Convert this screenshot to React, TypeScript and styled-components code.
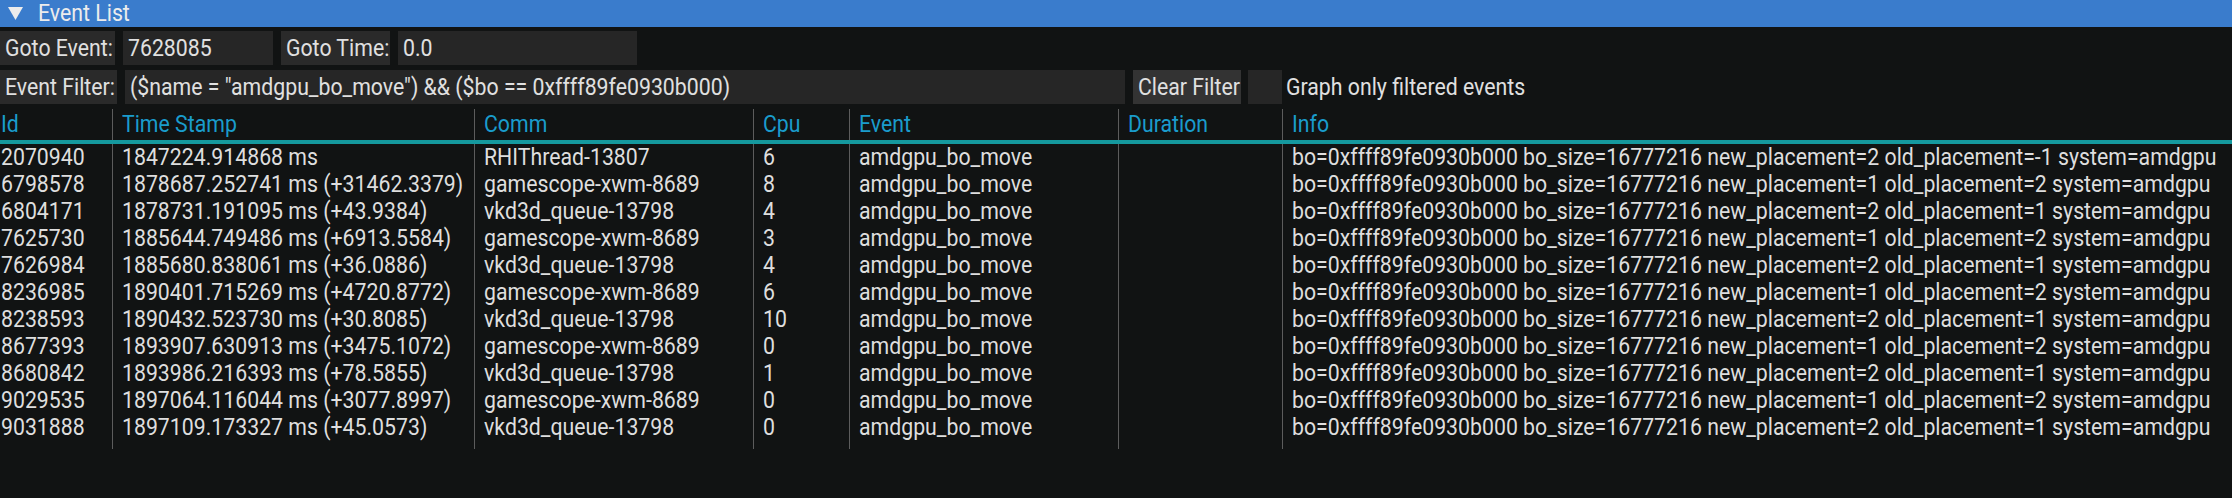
import styled, { createGlobalStyle } from "styled-components";

const GlobalStyle = createGlobalStyle`
    html, body {
        margin:0;
        padding:0;
        background:#111313;
    }
    body {
        font-family:Roboto, "Liberation Sans", sans-serif;
        font-size:23px;
        color:#dedede;
    }
`

const Window = styled.div`
    width:2232px;
    height:498px;
    background:#111313;
    overflow:hidden;
    display:flex;
    flex-direction:column;
`

// the app font is narrower than Roboto, so squeeze the glyphs a bit
const Txt = styled.span`
    display:inline-block;
    white-space:pre;
    transform:scaleX(0.925);
    transform-origin:left center;
`

const TitleBar = styled.div`
    height:27px;
    background:#3a7ccc;
    display:flex;
    align-items:center;
    gap:15px;
    padding-left:8px;
    color:#ececec;
    flex-shrink:0;
`

const Toolbar = styled.div`
    display:flex;
    flex-direction:column;
    gap:5px;
    padding-top:4px;
`

const ToolRow = styled.div`
    display:flex;
    align-items:center;
    height:34px;
    gap:8px;
`

const Button = styled.div<{ $w: number; $light?: boolean }>`
    height:100%;
    width:${({ $w }) => $w}px;
    box-sizing:border-box;
    display:flex;
    align-items:center;
    padding:0 5px;
    background:${({ $light }) => ($light ? "#333333" : "#2a2a2a")};
    color:#e0e0e0;
    overflow:hidden;
`

const Input = styled.div<{ $w: number }>`
    height:100%;
    width:${({ $w }) => $w}px;
    display:flex;
    align-items:center;
    padding:0 5px;
    box-sizing:border-box;
    background:#262626;
    color:#e0e0e0;
    overflow:hidden;
`

const CheckBox = styled.div`
    width:34px;
    height:100%;
    background:#262626;
    margin-left:-1px;
`

const CheckLabel = styled.span`
    margin-left:-4px;
    color:#e0e0e0;
`

const Table = styled.div`
    margin-top:5px;
    display:flex;
    flex-direction:column;
`

const cols = "112px 362px 279px 96px 269px 164px 1fr";

const HeaderRow = styled.div`
    display:grid;
    grid-template-columns:${cols};
    height:31px;
    border-bottom:4px solid #15999e;
`

const Row = styled.div<{ $h?: number }>`
    display:grid;
    grid-template-columns:${cols};
    height:${({ $h }) => $h ?? 27}px;
`

const Cell = styled.div<{ $head?: boolean }>`
    display:flex;
    align-items:center;
    overflow:hidden;
    padding-left:9px;
    border-left:1px solid #5c5c5c;
    color:${({ $head }) => ($head ? "#1a9ccc" : "#dedede")};

    &:first-child {
        border-left:none;
        padding-left:1px;
    }
`

const headers = ["Id", "Time Stamp", "Comm", "Cpu", "Event", "Duration", "Info"];

const info = (n: number, o: number) =>
    `bo=0xffff89fe0930b000 bo_size=16777216 new_placement=${n} old_placement=${o} system=amdgpu`;

const rows: string[][] = [
    ["2070940", "1847224.914868 ms", "RHIThread-13807", "6", info(2, -1)],
    ["6798578", "1878687.252741 ms (+31462.3379)", "gamescope-xwm-8689", "8", info(1, 2)],
    ["6804171", "1878731.191095 ms (+43.9384)", "vkd3d_queue-13798", "4", info(2, 1)],
    ["7625730", "1885644.749486 ms (+6913.5584)", "gamescope-xwm-8689", "3", info(1, 2)],
    ["7626984", "1885680.838061 ms (+36.0886)", "vkd3d_queue-13798", "4", info(2, 1)],
    ["8236985", "1890401.715269 ms (+4720.8772)", "gamescope-xwm-8689", "6", info(1, 2)],
    ["8238593", "1890432.523730 ms (+30.8085)", "vkd3d_queue-13798", "10", info(2, 1)],
    ["8677393", "1893907.630913 ms (+3475.1072)", "gamescope-xwm-8689", "0", info(1, 2)],
    ["8680842", "1893986.216393 ms (+78.5855)", "vkd3d_queue-13798", "1", info(2, 1)],
    ["9029535", "1897064.116044 ms (+3077.8997)", "gamescope-xwm-8689", "0", info(1, 2)],
    ["9031888", "1897109.173327 ms (+45.0573)", "vkd3d_queue-13798", "0", info(2, 1)],
];

export default function App() {
    return (
        <>
            <GlobalStyle />
            <Window>
                <TitleBar>
                    <svg width="15" height="13" viewBox="0 0 15 13">
                        <polygon points="0,0 15,0 7.5,13" fill="#ececec" />
                    </svg>
                    <Txt>Event List</Txt>
                </TitleBar>
                <Toolbar>
                    <ToolRow>
                        <Button $w={115}><Txt>Goto Event:</Txt></Button>
                        <Input $w={150}><Txt>7628085</Txt></Input>
                        <Button $w={109}><Txt>Goto Time:</Txt></Button>
                        <Input $w={239}><Txt>0.0</Txt></Input>
                    </ToolRow>
                    <ToolRow>
                        <Button $w={117}><Txt>Event Filter:</Txt></Button>
                        <Input $w={1000}>
                            <Txt>($name = "amdgpu_bo_move") &amp;&amp; ($bo == 0xffff89fe0930b000)</Txt>
                        </Input>
                        <Button $w={108} $light><Txt>Clear Filter</Txt></Button>
                        <CheckBox />
                        <CheckLabel><Txt>Graph only filtered events</Txt></CheckLabel>
                    </ToolRow>
                </Toolbar>
                <Table>
                    <HeaderRow>
                        {headers.map((h) => (
                            <Cell $head key={h}><Txt>{h}</Txt></Cell>
                        ))}
                    </HeaderRow>
                    {rows.map((r) => (
                        <Row key={r[0]}>
                            <Cell><Txt>{r[0]}</Txt></Cell>
                            <Cell><Txt>{r[1]}</Txt></Cell>
                            <Cell><Txt>{r[2]}</Txt></Cell>
                            <Cell><Txt>{r[3]}</Txt></Cell>
                            <Cell><Txt>amdgpu_bo_move</Txt></Cell>
                            <Cell></Cell>
                            <Cell><Txt>{r[4]}</Txt></Cell>
                        </Row>
                    ))}
                    <Row $h={8}>
                        {headers.map((h) => (
                            <Cell key={h} />
                        ))}
                    </Row>
                </Table>
            </Window>
        </>
    );
}
